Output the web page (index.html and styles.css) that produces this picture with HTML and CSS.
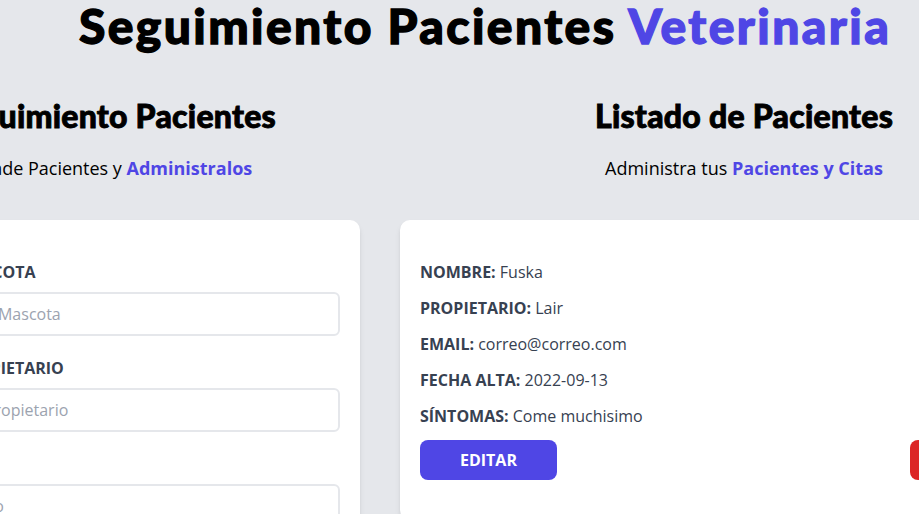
FILE: index.html
```html
<!DOCTYPE html>
<html lang="es">
<head>
<meta charset="utf-8">
<title>Seguimiento Pacientes Veterinaria</title>
<link rel="stylesheet" href="styles.css">
</head>
<body>
<div class="app">
  <h1 class="title">Seguimiento Pacientes <span class="accent">Veterinaria</span></h1>
  <div class="columns">
    <section class="col col-form">
      <h2 class="heading">Seguimiento Pacientes</h2>
      <p class="lead">Añade Pacientes y <span class="accent-bold">Administralos</span></p>
      <form class="card">
        <div class="field">
          <label class="label" for="mascota">Nombre Mascota</label>
          <input class="input" id="mascota" type="text" placeholder="Nombre de la Mascota">
        </div>
        <div class="field">
          <label class="label" for="propietario">Nombre Propietario</label>
          <input class="input" id="propietario" type="text" placeholder="Nombre del Propietario">
        </div>
        <div class="field">
          <label class="label" for="email">Email</label>
          <input class="input" id="email" type="email" placeholder="Email Contacto">
        </div>
      </form>
    </section>
    <section class="col col-list">
      <h2 class="heading">Listado de Pacientes</h2>
      <p class="lead">Administra tus <span class="accent-bold">Pacientes y Citas</span></p>
      <div class="card">
        <p class="row">Nombre: <span class="value">Fuska</span></p>
        <p class="row">Propietario: <span class="value">Lair</span></p>
        <p class="row">Email: <span class="value">correo@correo.com</span></p>
        <p class="row">Fecha Alta: <span class="value">2022-09-13</span></p>
        <p class="row">Síntomas: <span class="value">Come muchisimo</span></p>
        <div class="actions">
          <button class="btn btn-edit" type="button">Editar</button>
          <button class="btn btn-delete" type="button">Eliminar</button>
        </div>
      </div>
    </section>
  </div>
</div>
</body>
</html>
```

FILE: styles.css
```css
* { box-sizing: border-box; }
html, body { overflow: hidden; }
body {
  margin: 0;
  background: #e5e7eb;
  font-family: "Open Sans", "Noto Sans", sans-serif;
  font-size: 16px;
  line-height: 24px;
  color: #111827;
}
.app {
  width: 1246px;
  margin-left: -138px;
  padding-top: 2px;
}
.title {
  margin: 0;
  font-family: Lato, sans-serif;
  font-weight: 900;
  font-size: 48px;
  line-height: 48px;
  letter-spacing: 2.4px;
  -webkit-text-stroke: 1.3px currentColor;
  text-align: center;
  color: #000;
}
.accent { color: #4f46e5; }
.columns {
  display: flex;
  margin-top: 48px;
  margin-left: -20px;
}
.col-form { width: 538px; }
.col-list { width: 728px; }
.heading {
  margin: 0;
  font-family: Lato, sans-serif;
  font-weight: 900;
  font-size: 32px;
  line-height: 36px;
  letter-spacing: 0.25px;
  -webkit-text-stroke: 0.9px currentColor;
  text-align: center;
  color: #000;
}
.lead {
  margin: 20px 0 38px;
  font-size: 18px;
  line-height: 28px;
  text-align: center;
  color: #000;
}
.accent-bold { color: #4f46e5; font-weight: 700; }
.card {
  margin: 0 20px;
  background: #fff;
  border-radius: 10px;
  box-shadow: 0 4px 6px -1px rgba(0,0,0,.1), 0 2px 4px -2px rgba(0,0,0,.1);
  padding: 40px 20px;
}
.field { margin-bottom: 20px; }
.label {
  display: block;
  text-transform: uppercase;
  font-weight: 700;
  color: #374151;
}
.input {
  display: block;
  width: 100%;
  margin-top: 8px;
  padding: 8px;
  border: 2px solid #e5e7eb;
  border-radius: 6px;
  font: inherit;
  color: #111827;
  background: #fff;
}
.input::placeholder { color: #9ca3af; }
.row {
  margin: 0 0 12px;
  font-weight: 700;
  text-transform: uppercase;
  color: #374151;
}
.value { font-weight: 400; text-transform: none; }
.actions {
  display: flex;
  justify-content: space-between;
}
.btn {
  border: 0;
  border-radius: 8px;
  padding: 8px 40px;
  font: inherit;
  font-weight: 700;
  text-transform: uppercase;
  color: #fff;
  cursor: pointer;
}
.btn-edit { background: #4f46e5; }
.btn-delete { background: #dc2626; }
```
